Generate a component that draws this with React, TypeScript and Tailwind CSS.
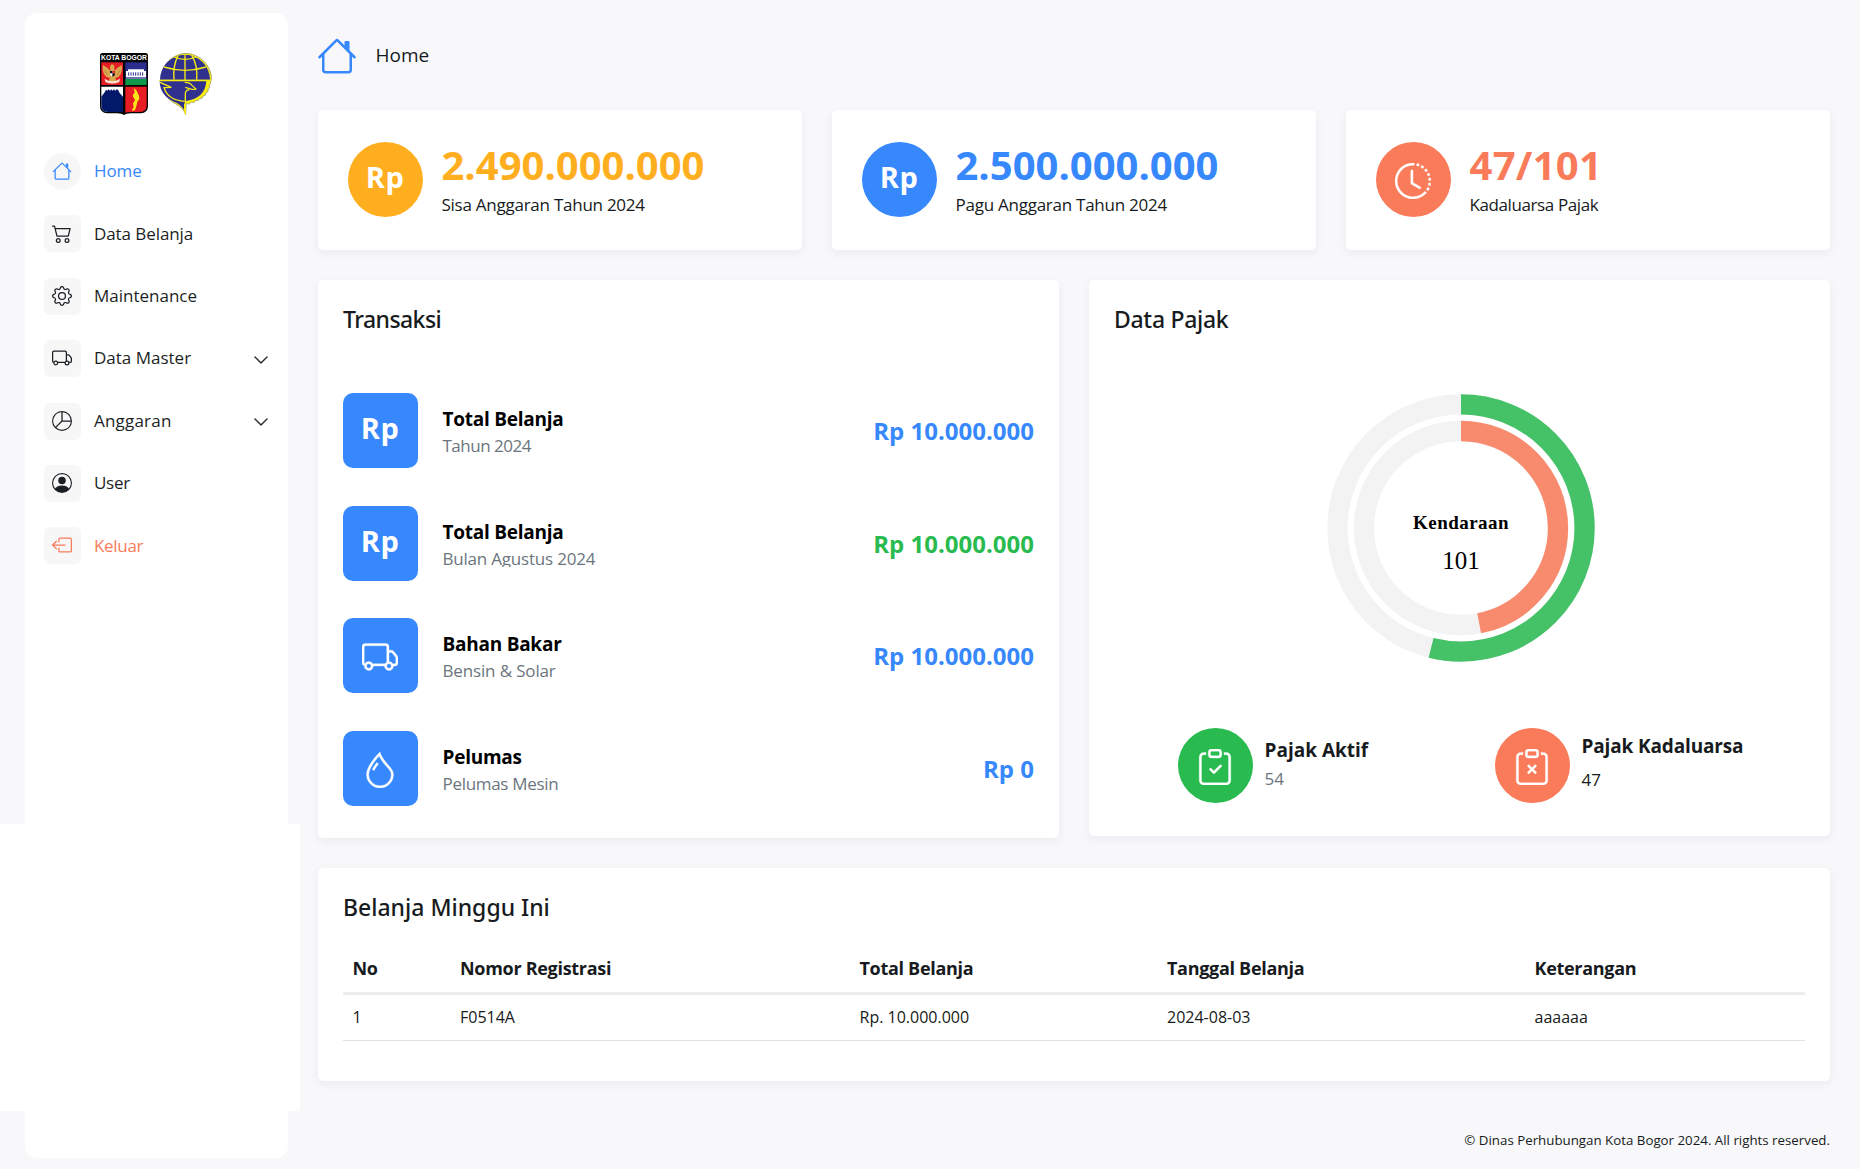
import type { ReactNode } from "react";
import {
  BsBoxArrowLeft,
  BsCart2,
  BsChevronDown,
  BsClipboardCheck,
  BsClipboardX,
  BsClockHistory,
  BsDroplet,
  BsGear,
  BsPersonCircle,
  BsPieChart,
  BsTruck,
} from "react-icons/bs";

function HouseIcon({ size }: { size: number }) {
  return (
    <svg width={size} height={size} viewBox="0 0 16 16" fill="currentColor" fillRule="evenodd">
      <path d="M2 13.5V7h1v6.5a.5.5 0 0 0 .5.5h9a.5.5 0 0 0 .5-.5V7h1v6.5a1.5 1.5 0 0 1-1.5 1.5h-9A1.5 1.5 0 0 1 2 13.5zm11-11V6l-2-2V2.5a.5.5 0 0 1 .5-.5h1a.5.5 0 0 1 .5.5z" />
      <path d="M7.293 1.5a1 1 0 0 1 1.414 0l6.647 6.646a.5.5 0 0 1-.708.708L8 2.207 1.354 8.854a.5.5 0 1 1-.708-.708L7.293 1.5z" />
    </svg>
  );
}

function BogorShield() {
  return (
    <svg width="48" height="62" viewBox="0 0 144 186">
      <path
        d="M0 8Q0 0 8 0H136Q144 0 144 8V160Q144 180 122 181H92Q78 181 72 186Q66 181 52 181H22Q0 180 0 160Z"
        fill="#050505"
      />
      <text
        x="3"
        y="21"
        textLength="138"
        lengthAdjust="spacingAndGlyphs"
        fontSize="19"
        fontWeight="700"
        fontFamily="Liberation Sans, sans-serif"
        fill="#fff"
      >
        KOTA BOGOR
      </text>
      <rect x="4" y="28" width="65" height="68" fill="#e81c24" />
      <rect x="76" y="28" width="64" height="50" fill="#2c2e8f" />
      <rect x="76" y="78" width="64" height="18" fill="#0d9a48" />
      <path d="M4 101H69V177H24Q4 176 4 158Z" fill="#fff" />
      <path d="M4 131L14 118L18 110L22 113L26 109L30 113L34 109L38 113L42 109L46 113L50 109L54 110L59 120L69 131V177H24Q4 176 4 158Z" fill="#02196a" />
      <path d="M76 101H140V158Q140 176 120 177H92Q80 177 76 179Z" fill="#e81c24" />
      {/* Garuda */}
      <path
        d="M9 36Q20 42 31 54L30 40L36 33L43 38L43 54Q54 42 65 36Q69 60 54 73L46 74L50 88H24L30 74L20 73Q5 60 9 36Z"
        fill="#d8a84e"
      />
      <path d="M30 54H45V66Q38 74 30 66Z" fill="#fff" />
      <path d="M30 54H37V61H30ZM37 61H45V66Q41 71 37 71Z" fill="#151515" />
      <path d="M37 54H45V61H37Z" fill="#d7222a" />
      <path d="M14 77Q37 92 60 77L58 87Q37 96 16 87Z" fill="#f2e6d0" />
      <path d="M14 52L22 66M60 52L52 66" stroke="#a8702c" strokeWidth="2" />
      {/* Palace */}
      <path d="M84 49H132V54H138V72H78V54H84Z" fill="#fff" />
      <path d="M86 58V68M93 58V68M100 58V68M107 58V68M114 58V68M121 58V68M128 58V68" stroke="#2c2e8f" strokeWidth="3" />
      <path d="M78 75H138" stroke="#fff" strokeWidth="2" />
      {/* Flame */}
      <path
        d="M101 105L109 112L117 128L118 138L112 146L109 160L105 171L97 174L96 170L101 163L99 151L105 142L98 128L104 118Z"
        fill="#fae71a"
      />
    </svg>
  );
}

function TransportEmblem() {
  return (
    <svg width="54" height="62" viewBox="0 0 162 186">
      {/* Gear rim and tail */}
      <path
        d="M81 1A80 80 0 0 1 161 82L157 84L158 92L154 96L155 104L150 108L150 116L144 119L142 127L135 129L132 136L125 137L120 143L113 142L108 149L100 147L94 154L85 151L83 185Q76 164 52 152A80 80 0 0 1 81 1Z"
        fill="#f8ed12"
        stroke="#8a8a70"
        strokeWidth="2"
      />
      <path d="M81 5A76 76 0 0 1 156 80H6A76 76 0 0 1 81 5Z" fill="#30318f" />
      <path d="M5 85H145Q141 136 84 144V152H78V170Q66 152 48 146Q6 128 5 85Z" fill="#30318f" />
      <g fill="none" stroke="#f8ed12" strokeWidth="4">
        <path d="M81 4V82M48 80Q44 40 60 8M116 80Q120 40 102 8" />
        <path d="M18 42Q81 62 144 42M48 12Q81 26 114 12" />
        <path d="M3 82H160" />
        <path d="M6 88L40 103L18 104Q30 142 80 145" />
        <path d="M82 184V122Q82 112 94 110" />
        <path d="M80 88Q96 88 102 97L114 108Q104 112 92 106L82 103" strokeWidth="3.5" />
      </g>
    </svg>
  );
}

type MenuItem = { label: string; icon: ReactNode; tone: string; box: string; track: string; chevron?: boolean };

const menu: MenuItem[] = [
  { label: "Home", icon: <HouseIcon size={20} />, tone: "text-[#3688fc]", box: "rounded-full", track: "tracking-[-0.1px]" },
  { label: "Data Belanja", icon: <BsCart2 size={20} />, tone: "text-[#1b1f24]", box: "rounded-md", track: "tracking-[-0.08px]" },
  { label: "Maintenance", icon: <BsGear size={20} />, tone: "text-[#1b1f24]", box: "rounded-md", track: "tracking-normal" },
  { label: "Data Master", icon: <BsTruck size={20} />, tone: "text-[#1b1f24]", box: "rounded-md", track: "tracking-normal", chevron: true },
  { label: "Anggaran", icon: <BsPieChart size={20} />, tone: "text-[#1b1f24]", box: "rounded-md", track: "tracking-[0.2px]", chevron: true },
  { label: "User", icon: <BsPersonCircle size={20} />, tone: "text-[#1b1f24]", box: "rounded-md", track: "tracking-[-0.3px]" },
  { label: "Keluar", icon: <BsBoxArrowLeft size={20} />, tone: "text-[#f97b5a]", box: "rounded-md", track: "tracking-[-0.3px]" },
];

function Sidebar() {
  return (
    <aside className="relative mt-[13px] ml-[25px] h-[1145px] w-[263px] shrink-0 rounded-xl bg-white">
      <div className="absolute top-[811px] -left-[25px] h-[287px] w-[300px] bg-white" />
      <div className="flex h-[102px] items-end gap-2.5 pl-[75px]">
        <BogorShield />
        <TransportEmblem />
      </div>
      <nav className="mt-[38px] flex flex-col gap-[25.4px] pr-[19px] pl-[19px]">
        {menu.map((m) => (
          <a key={m.label} className={`flex h-[37px] items-center ${m.tone}`}>
            <span className={`flex size-[37px] items-center justify-center bg-[#f7f7f7] pr-px pb-px ${m.box}`}>{m.icon}</span>
            <span className={`ml-[13px] flex-1 pb-px text-[17px] ${m.track}`}>{m.label}</span>
            {m.chevron && <BsChevronDown size={16} className="mt-0.5 stroke-current stroke-[0.5px]" />}
          </a>
        ))}
      </nav>
    </aside>
  );
}

function Card({ className, children }: { className: string; children: ReactNode }) {
  return <section className={`rounded-[5px] bg-white shadow-[0_3px_10px_rgba(40,42,60,0.06)] ${className}`}>{children}</section>;
}

function Rp() {
  return <span className="-mt-1.5 -ml-px text-[29px] leading-none font-bold tracking-[0.6px]">Rp</span>;
}

type StatProps = { badge: ReactNode; badgeColor: string; valueColor: string; value: string; label: string; track: string };

function Stat({ badge, badgeColor, valueColor, value, label, track }: StatProps) {
  return (
    <Card className="flex h-[140px] gap-[18.5px] pt-8 pl-[30px]">
      <div className={`flex size-[75px] items-center justify-center rounded-full text-white ${badgeColor}`}>{badge}</div>
      <div>
        <div className={`text-[40px] leading-[45px] font-bold ${valueColor}`}>{value}</div>
        <div className={`text-[17px] leading-[35px] ${track}`}>{label}</div>
      </div>
    </Card>
  );
}

const transactions = [
  { icon: <Rp />, title: "Total Belanja", sub: "Tahun 2024", track: "tracking-[-0.5px]", amount: "Rp 10.000.000", tone: "text-[#3688fc]" },
  { icon: <Rp />, title: "Total Belanja", sub: "Bulan Agustus 2024", track: "h-[21px] overflow-hidden tracking-[-0.2px]", amount: "Rp 10.000.000", tone: "text-[#29bb50]" },
  { icon: <BsTruck size={36} className="mt-0.5 -ml-0.5 stroke-white stroke-[0.15px]" />, title: "Bahan Bakar", sub: "Bensin & Solar", track: "tracking-[-0.15px]", amount: "Rp 10.000.000", tone: "text-[#3688fc]" },
  { icon: <BsDroplet size={36} className="mt-[3px] -ml-0.5 stroke-white stroke-[0.15px]" />, title: "Pelumas", sub: "Pelumas Mesin", track: "tracking-[-0.3px]", amount: "Rp 0", tone: "text-[#3688fc]" },
];

function CardTitle({ className, children }: { className: string; children: ReactNode }) {
  return <h2 className={`font-['Noto_Sans',sans-serif] text-[23px] leading-9 font-medium ${className}`}>{children}</h2>;
}

function Transactions() {
  return (
    <Card className="h-[558px] px-[25px] pt-[21px]">
      <CardTitle className="tracking-[-0.56px]">Transaksi</CardTitle>
      <div className="mt-14 flex flex-col gap-[37.5px]">
        {transactions.map((t, i) => (
          <div key={i} className="flex h-[75px]">
            <div className="flex size-[75px] items-center justify-center rounded-[10px] bg-[#3688fc] text-white">{t.icon}</div>
            <div className="ml-[24.5px] flex-1 pt-3">
              <div className="text-[19px] leading-7 font-bold tracking-[-0.25px] text-black">{t.title}</div>
              <div className={`text-[17px] leading-[26px] text-[#6c757d] ${t.track}`}>{t.sub}</div>
            </div>
            <div className={`self-center pt-px text-2xl font-bold ${t.tone}`}>{t.amount}</div>
          </div>
        ))}
      </div>
    </Card>
  );
}

/* Radial gauge: each ring is drawn from the top, clockwise, over a grey track. */
function Ring({ radius, percent, color }: { radius: number; percent: number; color: string }) {
  return (
    <g fill="none" strokeWidth="20.3" transform="rotate(-90 150 150)">
      <circle cx="150" cy="150" r={radius} stroke="#f3f3f3" />
      <circle cx="150" cy="150" r={radius} stroke={color} pathLength="100" strokeDasharray={`${percent} ${100 - percent}`} />
    </g>
  );
}

function TaxChart() {
  return (
    <svg width="300" height="300" viewBox="0 0 300 300" className="ml-[222px]">
      <Ring radius={123.6} percent={53.9} color="#45c268" />
      <Ring radius={97} percent={47} color="#f88b6e" />
      <text x="150" y="151" textAnchor="middle" fontFamily="Liberation Serif, serif" fontSize="19" fontWeight="700" letterSpacing="0.45">
        Kendaraan
      </text>
      <text x="150" y="190.5" textAnchor="middle" fontFamily="Liberation Serif, serif" fontSize="25">
        101
      </text>
    </svg>
  );
}

function TaxPanel() {
  return (
    <Card className="h-[556px] pt-[21px]">
      <CardTitle className="ml-[25px] tracking-[-0.3px]">Data Pajak</CardTitle>
      <div className="mt-[41px]">
        <TaxChart />
      </div>
      <div className="mt-[50px] flex pl-[89px]">
        <div className="flex w-[317px] gap-[11.5px]">
          <div className="flex size-[75px] items-center justify-center rounded-full bg-[#29bb50] text-white">
            <BsClipboardCheck size={36} className="mt-[3px] -ml-px stroke-white stroke-[0.15px]" />
          </div>
          <div className="pt-[7.5px] leading-7">
            <div className="text-[19px] font-bold">Pajak Aktif</div>
            <div className="mt-px text-[17px] text-[#6c757d]">54</div>
          </div>
        </div>
        <div className="flex gap-[11.5px]">
          <div className="flex size-[75px] items-center justify-center rounded-full bg-[#f97b5a] text-white">
            <BsClipboardX size={36} className="mt-[3px] -ml-px stroke-white stroke-[0.15px]" />
          </div>
          <div className="pt-[3.5px] leading-7">
            <div className="text-[19px] font-bold tracking-[-0.15px]">Pajak Kadaluarsa</div>
            <div className="mt-1.5 text-[17px]">47</div>
          </div>
        </div>
      </div>
    </Card>
  );
}

const columns = ["No", "Nomor Registrasi", "Total Belanja", "Tanggal Belanja", "Keterangan"];
const cells = ["1", "F0514A", "Rp. 10.000.000", "2024-08-03", "aaaaaa"];

function WeeklySpending() {
  return (
    <Card className="h-[213px] px-[25px] pt-[21px]">
      <CardTitle className="tracking-normal">Belanja Minggu Ini</CardTitle>
      <div className="mt-[18px] grid h-[52px] grid-cols-[107.5px_399.5px_307.5px_367.5px_1fr] items-center border-b-[3px] border-[#ededed] text-lg font-bold tracking-[-0.3px]">
        {columns.map((c) => (
          <div key={c} className="pl-[9.5px]">{c}</div>
        ))}
      </div>
      <div className="grid h-[46px] grid-cols-[107.5px_399.5px_307.5px_367.5px_1fr] items-center border-b border-[#dee2e6] pb-px text-base">
        {cells.map((c) => (
          <div key={c} className="pl-[9.5px]">{c}</div>
        ))}
      </div>
    </Card>
  );
}

export default function App() {
  return (
    <div className="flex h-[1169px] w-[1860px] overflow-hidden bg-[#f8f8fb] font-['Open_Sans',sans-serif] text-[#171b20]">
      <Sidebar />
      <main className="ml-[30px] w-[1512px]">
        <header className="mt-9 flex h-10 items-center gap-[18.5px]">
          <span className="-ml-px text-[#3688fc]">
            <HouseIcon size={40} />
          </span>
          <h1 className="pb-px text-[19px]">Home</h1>
        </header>
        <div className="mt-[34px] grid grid-cols-3 gap-[30px]">
          <Stat badge={<Rp />} badgeColor="bg-[#ffae1f]" valueColor="text-[#ffae1f]" value="2.490.000.000" label="Sisa Anggaran Tahun 2024" track="tracking-[-0.25px]" />
          <Stat badge={<Rp />} badgeColor="bg-[#3688fc]" valueColor="text-[#3688fc]" value="2.500.000.000" label="Pagu Anggaran Tahun 2024" track="tracking-[-0.25px]" />
          <Stat
            badge={<BsClockHistory size={36} className="mt-[3px] -ml-px stroke-white stroke-[0.15px]" />}
            badgeColor="bg-[#f97b5a]"
            valueColor="text-[#f97b5a] tracking-[0.3px]"
            value="47/101"
            label="Kadaluarsa Pajak"
            track="tracking-[-0.4px]"
          />
        </div>
        <div className="my-[30px] grid grid-cols-2 items-start gap-[30px]">
          <Transactions />
          <TaxPanel />
        </div>
        <WeeklySpending />
        <footer className="mt-[49px] text-right text-[13.3px] leading-5">
          © Dinas Perhubungan Kota Bogor 2024. All rights reserved.
        </footer>
      </main>
    </div>
  );
}
